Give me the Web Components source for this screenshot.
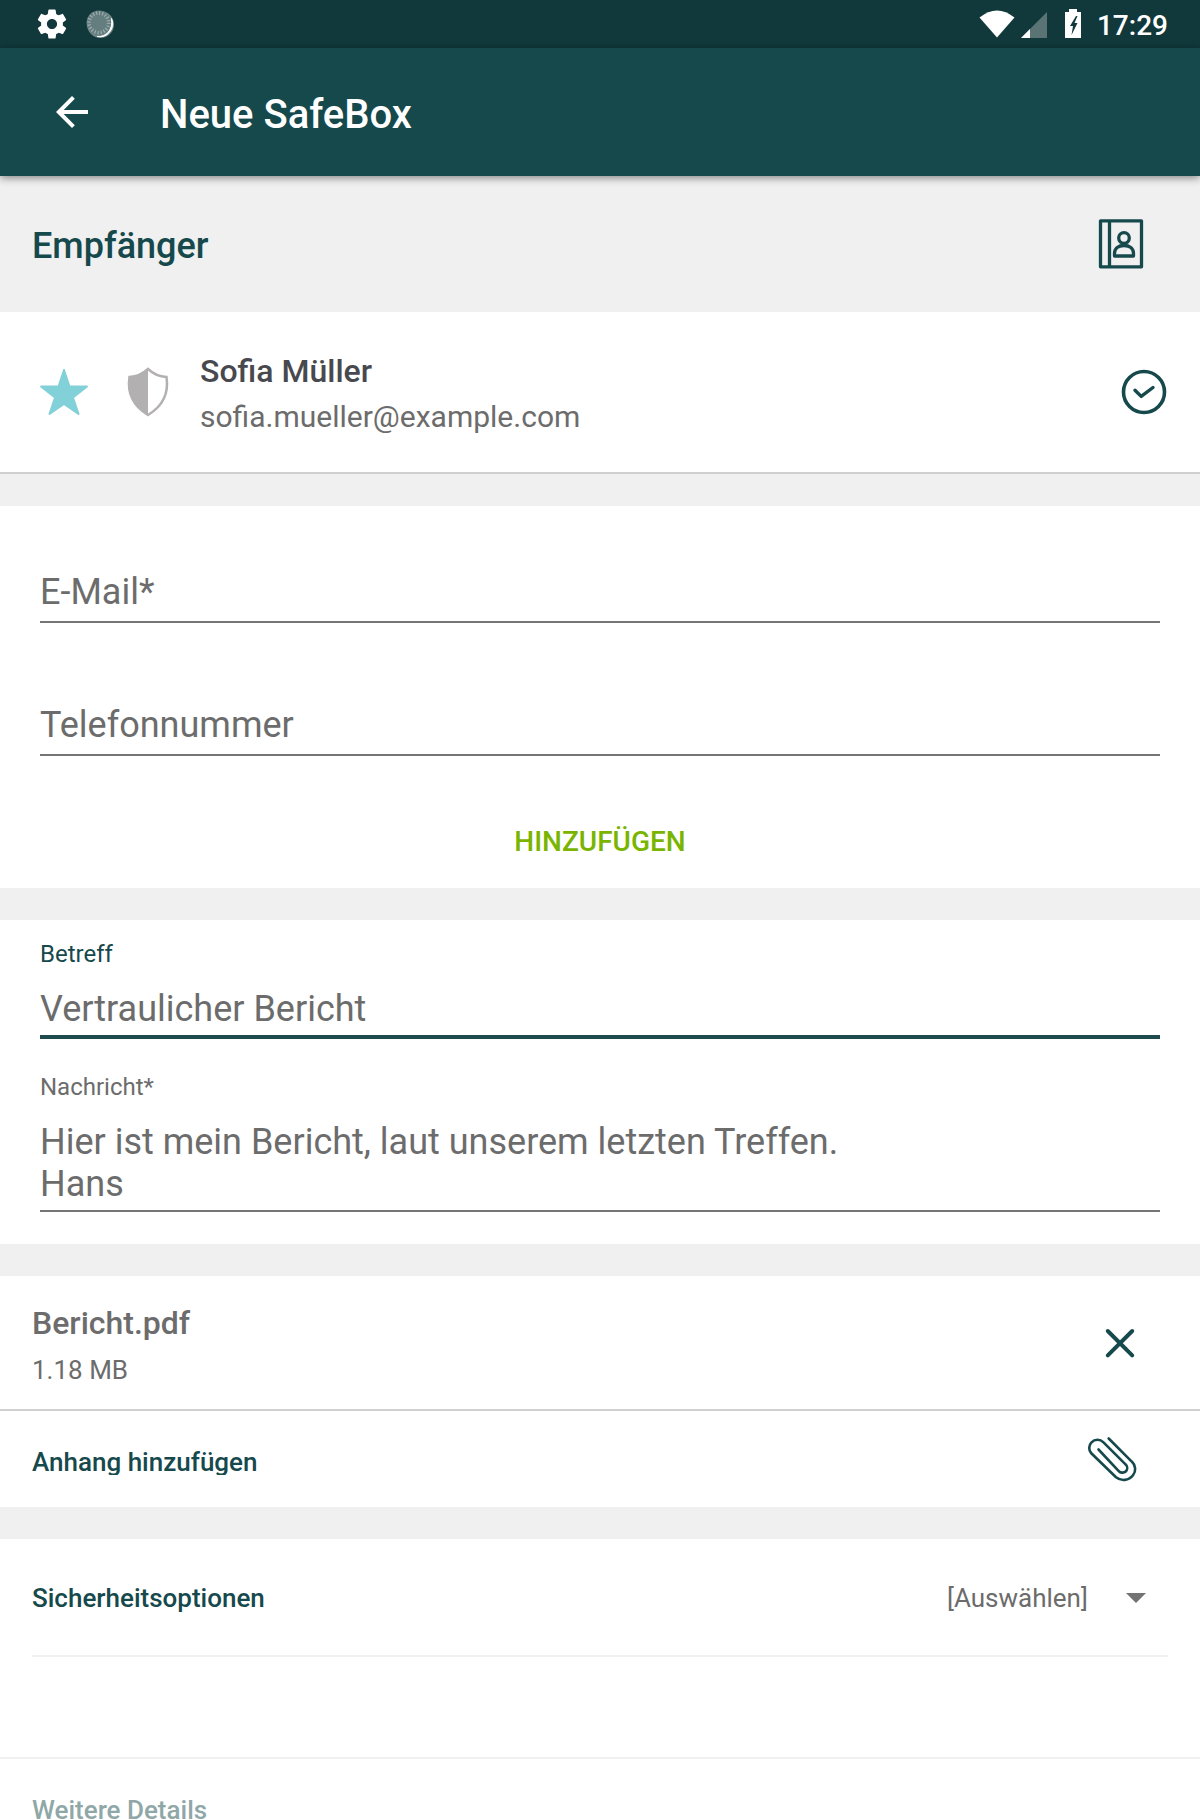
<!DOCTYPE html>
<html lang="de">
<head>
<meta charset="utf-8">
<meta name="viewport" content="width=device-width, initial-scale=1">
<title>Neue SafeBox</title>
<style>
  html, body { margin: 0; height: 100%; }
  body {
    overflow: hidden;
    background: #fff;
    font-family: Roboto, "Liberation Sans", sans-serif;
    --teal: #16494c;
    --teal-dark: #11383b;
    --grey: #6c6c6c;
    --band: #f0f0f0;
    --line: #d0d0d0;
  }
</style>
</head>
<body>
<safe-app></safe-app>

<script>
const define = (name, html, setup) => {
  const template = document.createElement('template');
  template.innerHTML = `<style>
    *, *::before { box-sizing: border-box; }
    svg { display: block; flex: none; }
    button { border: 0; padding: 0; margin: 0; background: none; color: inherit; font: inherit; cursor: pointer; text-align: left; }
  </style>` + html;
  customElements.define(name, class extends HTMLElement {
    constructor() {
      super();
      this.attachShadow({ mode: 'open' }).append(template.content.cloneNode(true));
    }
    connectedCallback() { if (setup) setup(this, this.shadowRoot); }
  });
};

define('status-bar', `
  <style>
    :host { display: flex; justify-content: space-between; align-items: center; height: 48px; padding: 0 32px 0 36px;
            background: var(--teal-dark); color: #fff; font-size: 28px; font-weight: 500; line-height: 32px; }
    div { display: flex; align-items: center; }
    .left { gap: 16px; }
    time { padding: 4px 0 0 16px; }
  </style>
  <div class="left">
    <svg width="32" height="32" viewBox="1 1 22 22" fill="#fff"><path d="M19.43 12.98c.04-.32.07-.64.07-.98s-.03-.66-.07-.98l2.11-1.65c.19-.15.24-.42.12-.64l-2-3.46c-.12-.22-.39-.3-.61-.22l-2.49 1c-.52-.4-1.08-.73-1.69-.98l-.38-2.65C14.46 2.18 14.25 2 14 2h-4c-.25 0-.46.18-.49.42l-.38 2.65c-.61.25-1.17.59-1.69.98l-2.49-1c-.23-.09-.49 0-.61.22l-2 3.46c-.13.22-.07.49.12.64l2.11 1.65c-.04.32-.07.65-.07.98s.03.66.07.98l-2.11 1.65c-.19.15-.24.42-.12.64l2 3.46c.12.22.39.3.61.22l2.49-1c.52.4 1.08.73 1.69.98l.38 2.65c.03.24.24.42.49.42h4c.25 0 .46-.18.49-.42l.38-2.65c.61-.25 1.17-.59 1.69-.98l2.49 1c.23.09.49 0 .61-.22l2-3.46c.12-.22.07-.49-.12-.64l-2.11-1.65zM12 15.5c-1.93 0-3.5-1.57-3.5-3.5s1.57-3.5 3.5-3.5 3.5 1.57 3.5 3.5-1.57 3.5-3.5 3.5z"/></svg>
    <svg width="32" height="32" viewBox="0 0 32 32">
      <circle cx="16.500" cy="16.500" r="13.500" fill="#6f8788"/>
      <path d="M27.500 10.500A13 13 0 0 1 13 28.500Q20 29 24.500 24Q28.500 18.500 27.500 10.500z" fill="#fff" stroke="#fff"/>
      <circle cx="14.800" cy="14.800" r="12.300" fill="#647d7e"/>
      <circle cx="14.800" cy="14.800" r="9.800" fill="none" stroke="#9fb0b0" stroke-width="3.600" stroke-dasharray="1.100 1.980"/>
    </svg>
  </div>
  <div>
    <svg width="40" height="32" viewBox="0 0 40 32"><path d="M.5 9.500Q18-4.500 35.500 9.500L18 29.500z" fill="#fff"/></svg>
    <svg width="36" height="32" viewBox="0 0 36 32"><path d="M28 4v26H2z" fill="#5a7475"/><path d="M11 21v9H2z" fill="#fff"/></svg>
    <svg width="26" height="32" viewBox="0 0 26 32"><path d="M14 1h8v3h4v26H10V4h4z" fill="#fff"/><path d="M21 8l-6 10h3l-1.500 9 6-12h-3l3-7z" fill="#11383b"/></svg>
    <time>17:29</time>
  </div>
`);

define('app-bar', `
  <style>
    :host { display: flex; align-items: center; gap: 64px; height: 128px; padding: 0 48px; position: relative; z-index: 1;
            background: var(--teal); color: #fff; box-shadow: 0 2px 8px rgba(0,0,0,.45); }
    h1 { margin: 0; padding-top: 6px; font-size: 40px; line-height: 48px; font-weight: 500; }
  </style>
  <button aria-label="Zurück"><svg width="48" height="48" viewBox="0 0 24 24" fill="#fff"><path d="M20 11H7.830l5.590-5.590L12 4l-8 8 8 8 1.410-1.410L7.830 13H20v-2z"/></svg></button>
  <h1><slot></slot></h1>
`);

define('section-header', `
  <style>
    :host { display: flex; justify-content: space-between; align-items: center; height: 136px; padding: 0 56px 0 32px;
            background: var(--band); color: var(--teal); }
    h2 { margin: 0; padding-top: 4px; font-size: 36px; line-height: 42px; font-weight: 500; }
  </style>
  <h2><slot></slot></h2>
  <button aria-label="Kontakte"><svg width="46" height="52" viewBox="0 0 46 52" fill="none" stroke="#16494c" stroke-width="3.300" stroke-linejoin="round">
    <path d="M2.500 2.800h41v46h-41zM11.500 2.800v46"/><circle cx="26" cy="20" r="5.300"/><path d="M16.500 38v-2.500c0-5 4-8 9.500-8s9.500 3 9.500 8v2.500z"/></svg></button>
`);

define('contact-row', `
  <style>
    :host { display: flex; align-items: center; height: 162px; padding: 0 32px; border-bottom: 2px solid var(--line); }
    .marks { display: flex; width: 168px; gap: 32px; padding-left: 4px; }
    .text { flex: 1; display: grid; gap: 9px; padding-top: 3px; }
    strong { font-size: 32px; line-height: 38px; font-weight: 500; color: #48494e; }
    span { font-size: 30px; line-height: 36px; color: var(--grey); }
  </style>
  <div class="marks">
    <svg width="56" height="56" viewBox="0 0 56 56"><path d="M28 6l5.500 16.500H51L37 33.500 42.500 50 28 40 13.500 50 19 33.500 5 22.500h17.500z" fill="#82d1d9" stroke="#82d1d9" stroke-width="2" stroke-linejoin="round"/></svg>
    <svg width="48" height="56" viewBox="0 0 48 56"><path d="M24 5Q32 12.500 42.500 13C45 29.500 38 42.500 24 51 10 42.500 3 29.500 5.500 13Q16 12.500 24 5z" fill="#fff" stroke="#b3b0b2" stroke-width="2.500"/><path d="M24 5V51C10 42.500 3 29.500 5.500 13Q16 12.500 24 5z" fill="#b3b0b2"/></svg>
  </div>
  <div class="text"><strong><slot name="name"></slot></strong><span><slot></slot></span></div>
  <button aria-label="Bestätigt"><svg width="48" height="48" viewBox="0 0 48 48" fill="none" stroke="#16494c" stroke-linecap="round" stroke-linejoin="round"><circle cx="24" cy="24" r="20.500" stroke-width="3.600"/><path d="M15 22.200l6.200 6.200L33 19.500" stroke-width="3.400"/></svg></button>
`);

define('form-card', `
  <style>
    :host { display: flex; flex-direction: column; gap: 36px; padding: 20px 40px 32px; }
    :host([flush]) { padding-bottom: 0; }
  </style>
  <slot></slot>
`);

define('text-field', `
  <style>
    :host { display: grid; grid-template-rows: 28px 20px auto 5px 2px; color: var(--grey); }
    label { grid-area: 1 / 1; font-size: 24px; line-height: 28px; }
    input, textarea { grid-area: 3 / 1; display: block; width: 100%; min-width: 0; margin: 0; padding: 0; border: 0; outline: 0; border-radius: 0;
            background: none; color: inherit; font: inherit; font-size: 36px; line-height: 42px; resize: none; overflow: hidden; }
    input { height: 42px; }
    .rule { grid-area: 5 / 1; height: 2px; background: #757575; }
    :host([empty]) label { grid-area: 1 / 1 / 4; align-self: end; padding-bottom: 3px; font-size: 36px; line-height: 42px; pointer-events: none; }
    :host([active]) label { color: var(--teal); }
    :host([active]) .rule { height: 4px; background: #1d4b4e; }
  </style>
  <label for="field"></label>
  <div class="rule"></div>
`, (host, root) => {
  if (root.querySelector('#field')) return;
  root.querySelector('label').textContent = host.getAttribute('label');
  const field = document.createElement(host.hasAttribute('multiline') ? 'textarea' : 'input');
  field.id = 'field';
  if (field.localName === 'textarea') field.rows = 2;
  else field.type = host.getAttribute('type') || 'text';
  field.value = host.textContent.trim();
  const update = () => host.toggleAttribute('empty', !field.value);
  field.addEventListener('input', update);
  root.querySelector('.rule').before(field);
  update();
});

define('text-action', `
  <style>
    :host { display: flex; justify-content: center; }
    button { height: 96px; padding: 4px 16px 0; font-size: 28px; line-height: 32px; font-weight: 500; color: #79b500; }
  </style>
  <button><slot></slot></button>
`);

define('band-gap', `<style>:host { display: block; height: 32px; background: var(--band); }</style>`);

define('file-row', `
  <style>
    :host { display: flex; justify-content: space-between; align-items: center; padding: 28px 56px 24px 32px; border-bottom: 2px solid var(--line); color: var(--grey); }
    .text { display: grid; gap: 13px; }
    strong { font-size: 32px; line-height: 38px; font-weight: 500; }
    span { font-size: 26px; line-height: 30px; }
  </style>
  <div class="text"><strong><slot></slot></strong><span><slot name="size"></slot></span></div>
  <button aria-label="Entfernen"><svg width="48" height="48" viewBox="0 0 48 48" fill="none" stroke="#16494c" stroke-width="4" stroke-linecap="round"><path d="M11.800 10l24.400 24.400M36.200 10L11.800 34.400"/></svg></button>
`);

define('attach-row', `
  <style>
    :host { display: block; color: var(--teal); }
    button { display: flex; justify-content: space-between; align-items: center; width: 100%; height: 96px; padding: 4px 60px 0 32px; }
    span { height: 28px; overflow: hidden; font-size: 26px; line-height: 30px; font-weight: 500; }
  </style>
  <button><span><slot></slot></span>
    <svg width="56" height="56" viewBox="0 0 56 56" fill="none" stroke="#16494c" stroke-width="2.600" stroke-linecap="round"><path d="M24.700 5.500L48 28.800A10 10 0 0 1 49 42.300A12 12 0 0 1 32 44.300L7.300 20.300A8 8 0 0 1 7.500 9.300A8.500 8.500 0 0 1 19.500 9.300L41.500 31.300A5 5 0 0 1 42 38.300A5.200 5.200 0 0 1 34.500 37.800L14.500 16.500"/></svg>
  </button>
`);

define('option-row', `
  <style>
    :host { display: flex; justify-content: space-between; align-items: center; height: 118px; margin: 0 32px; padding-top: 2px; box-sizing: border-box; border-bottom: 2px solid var(--band); font-size: 26px; line-height: 30px; }
    label { font-weight: 500; color: var(--teal); }
    .picker { display: grid; align-items: center; justify-items: end; }
    select { grid-area: 1 / 1; appearance: none; margin: 0; padding: 0 80px 0 0; border: 0; background: none; color: var(--grey); font: inherit; }
    svg { grid-area: 1 / 1; margin-right: 22px; pointer-events: none; }
  </style>
  <label for="choice"><slot></slot></label>
  <div class="picker">
    <select id="choice"><option>[Auswählen]</option></select>
    <svg width="20" height="10" viewBox="0 0 20 10"><path d="M0 0h20L10 10z" fill="#737373"/></svg>
  </div>
`);

define('details-toggle', `
  <style>
    :host { display: block; margin-top: 100px; border-top: 2px solid var(--band); }
    button { width: 100%; padding: 36px 32px; font-size: 26px; line-height: 30px; font-weight: 500; color: #90a7a8; }
  </style>
  <button><slot></slot></button>
`);

define('safe-app', `
  <style>
    :host { display: flex; flex-direction: column; height: 100%; }
    main { flex: 1; min-height: 0; overflow: hidden; }
  </style>
  <status-bar></status-bar>
  <app-bar>Neue SafeBox</app-bar>
  <main>
    <section-header>Empfänger</section-header>
    <contact-row><span slot="name">Sofia Müller</span>sofia.mueller@example.com</contact-row>
    <band-gap></band-gap>
    <form-card flush>
      <text-field label="E-Mail*" type="email"></text-field>
      <text-field label="Telefonnummer" type="tel"></text-field>
      <text-action>HINZUFÜGEN</text-action>
    </form-card>
    <band-gap></band-gap>
    <form-card>
      <text-field label="Betreff" active>Vertraulicher Bericht</text-field>
      <text-field label="Nachricht*" multiline>Hier ist mein Bericht, laut unserem letzten Treffen.
Hans</text-field>
    </form-card>
    <band-gap></band-gap>
    <file-row>Bericht.pdf<span slot="size">1.18 MB</span></file-row>
    <attach-row>Anhang hinzufügen</attach-row>
    <band-gap></band-gap>
    <option-row>Sicherheitsoptionen</option-row>
    <details-toggle>Weitere Details</details-toggle>
  </main>
`);
</script>
</body>
</html>
